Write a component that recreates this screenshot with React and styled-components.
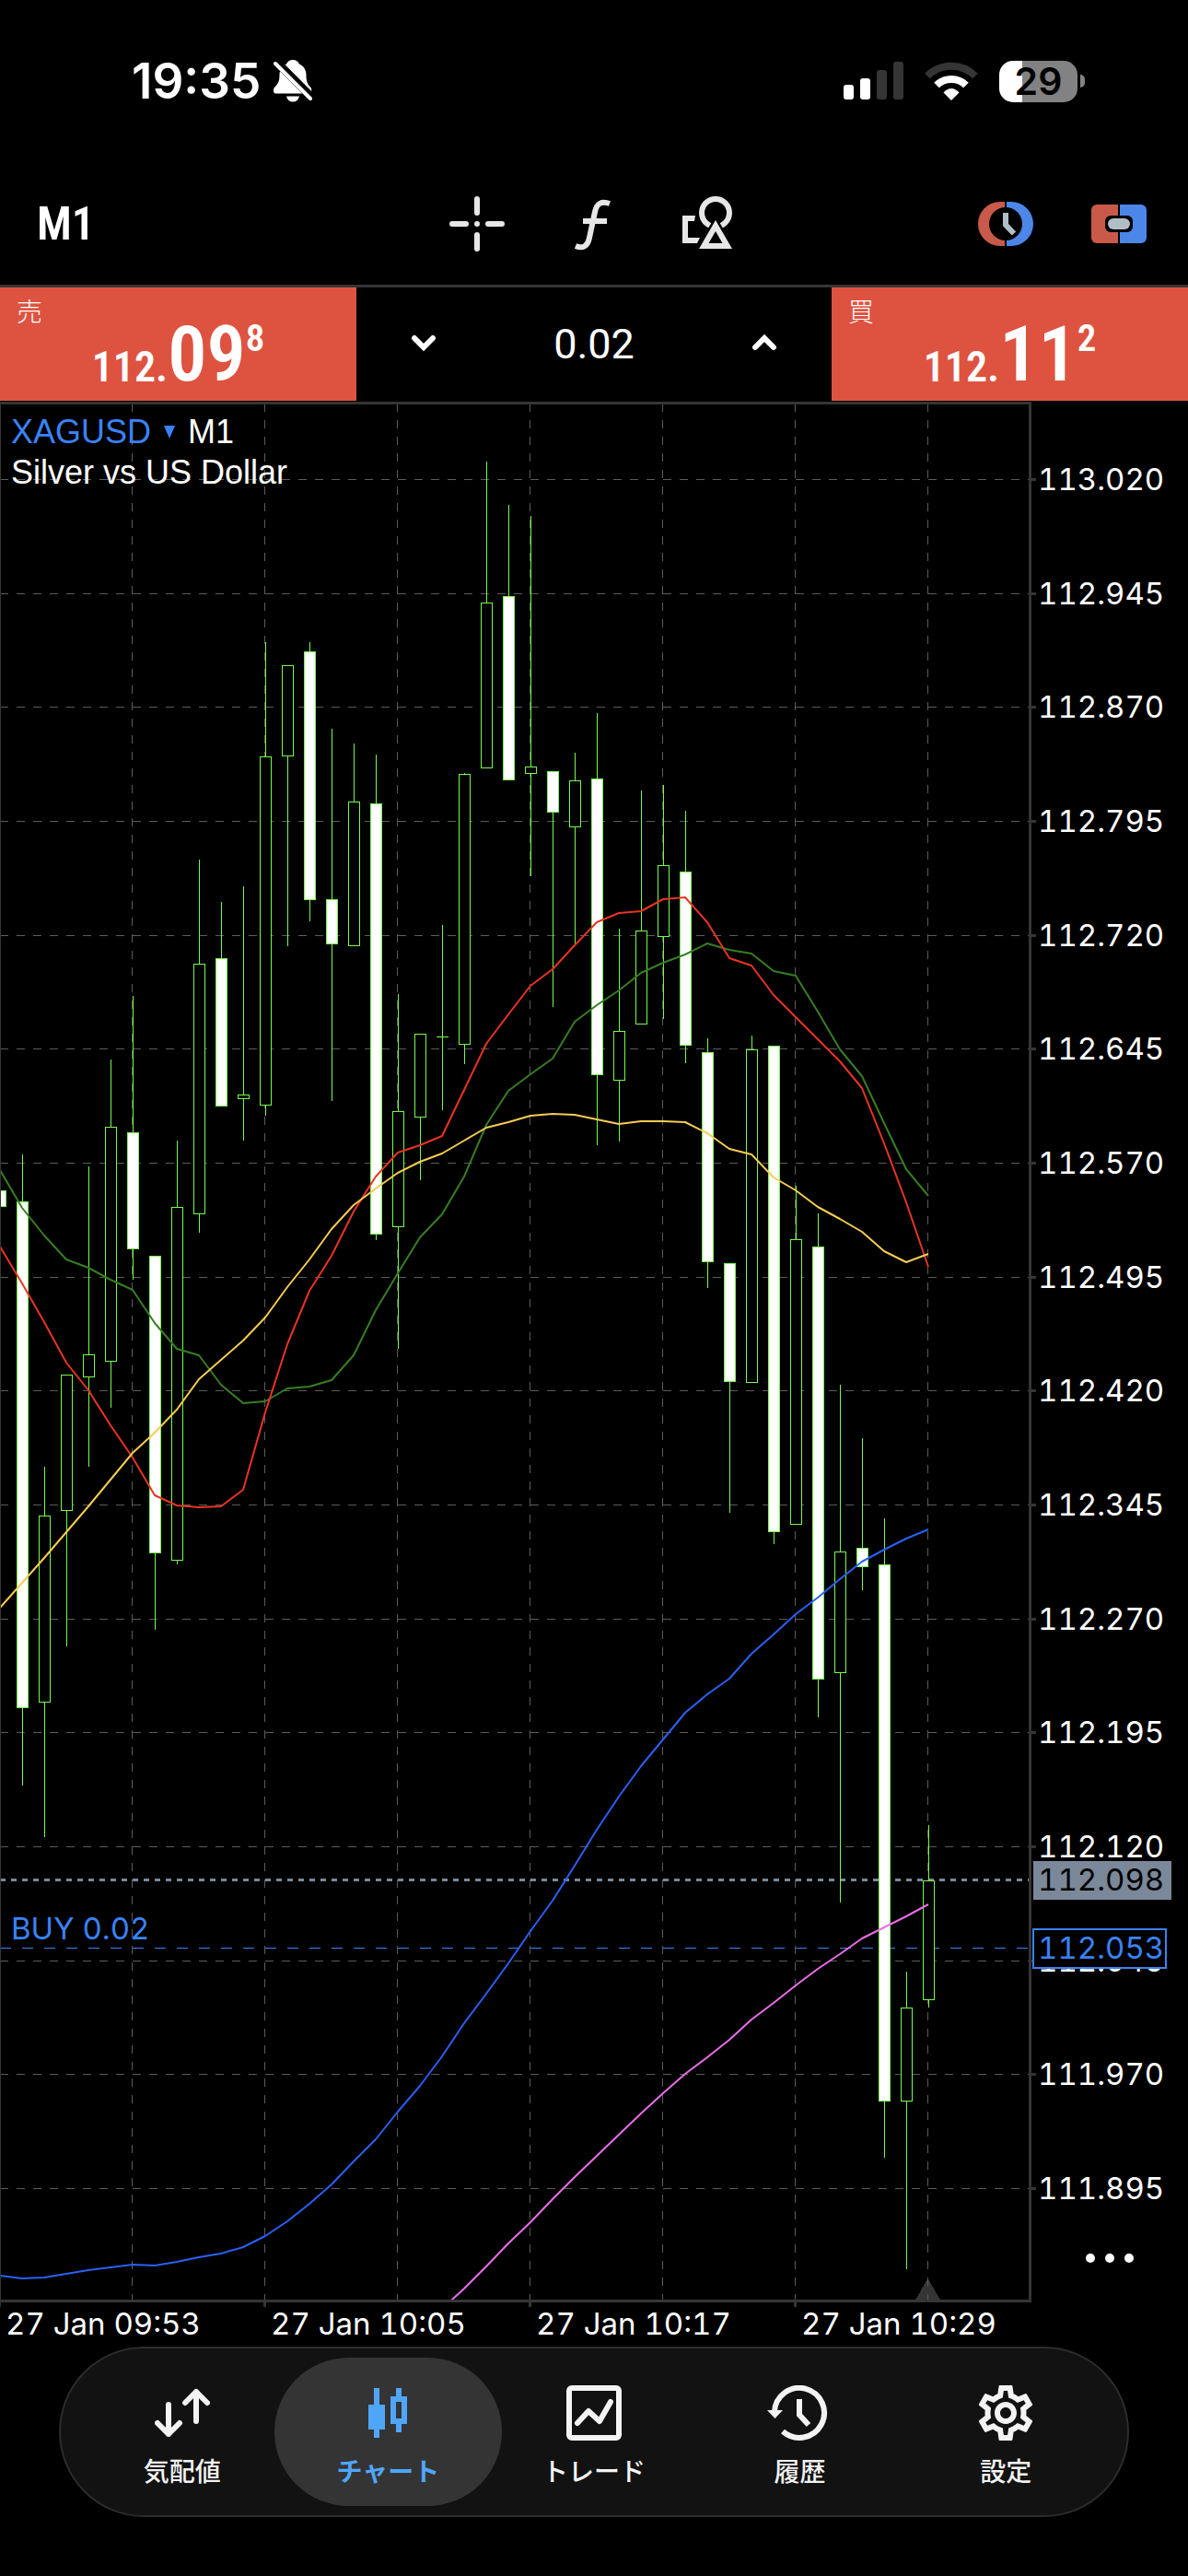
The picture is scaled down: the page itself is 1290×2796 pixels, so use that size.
import React, { useState } from "react";
import styled, { createGlobalStyle, css } from "styled-components";
import { MdOutlineSettings } from "react-icons/md";

const color = {
  bg: "#000000",
  line: "#353535",
  grid: "#5c5c5c",
  sell: "#de5340",
  blue: "#3a82f7",
  tabBlue: "#4fa6f8",
  bull: "#76fb4c",
  slate: "#7b8899",
  icon: "#e6e6e6",
  red: "#c95a49",
  azure: "#4c86e8",
  steel: "#b1bec5",
};

const uiFont = `Inter, "Noto Sans CJK JP", sans-serif`;
const narrowFont = `"Liberation Sans Narrow", "Roboto Condensed", Roboto, sans-serif`;

const GlobalStyle = createGlobalStyle`
  body {
    margin: 0;
    background: ${color.bg};
    color: #fff;
    font-family: ${uiFont};
  }
  button, input {
    appearance: none;
    margin: 0;
    padding: 0;
    border: 0;
    background: none;
    color: inherit;
    font: inherit;
  }
  button { cursor: pointer; }
  svg { display: block; }
`;

const Screen = styled.main`
  display: flex;
  flex-direction: column;
  background: ${color.bg};
`;

/* ---------- status bar ---------- */

const StatusBar = styled.header`
  display: flex;
  justify-content: space-between;
  align-items: center;
  height: 176px;
  padding: 0 112px 0 143px;
  box-sizing: border-box;
`;

const StatusGroup = styled.div`
  display: flex;
  align-items: center;
  gap: ${(p) => p.$gap}px;
`;

const Time = styled.time`
  font-size: 53px;
  line-height: 60px;
  font-weight: 600;
`;

const Battery = styled.div`
  display: flex;
  align-items: center;
  gap: 3px;
`;

const BatteryBody = styled.div`
  width: 85px;
  height: 45px;
  border-radius: 15px;
  background: linear-gradient(90deg, #fff 30%, #828282 30%);
  color: #000;
  font-size: 41px;
  line-height: 45px;
  font-weight: 600;
  text-align: center;
`;

const BatteryNub = styled.div`
  width: 5px;
  height: 14px;
  border-radius: 0 5px 5px 0;
  background: #828282;
`;

/* ---------- toolbar ---------- */

const Toolbar = styled.nav`
  display: grid;
  grid-template-columns: 1fr auto 1fr;
  align-items: center;
  height: 133px;
  padding: 0 45px 0 40px;
  border-bottom: 3px solid ${color.line};
`;

const Tools = styled.div`
  display: flex;
  gap: ${(p) => p.$gap}px;
  justify-content: ${(p) => (p.$end ? "flex-end" : "center")};
`;

const Timeframe = styled.button`
  justify-self: start;
  font-family: ${narrowFont};
  font-size: 50px;
  line-height: 60px;
  font-weight: 600;
`;

/* ---------- one click trading ---------- */

const TradePanel = styled.section`
  display: grid;
  grid-template-columns: 3fr 4fr 3fr;
  height: 123px;
  margin-bottom: 1px;
`;

const PriceButton = styled.button`
  display: flex;
  flex-direction: column;
  padding: 11px 18px 0;
  background: ${color.sell};
  text-align: left;
`;

const Side = styled.span`
  font-family: "Noto Sans CJK JP", sans-serif;
  font-size: 28px;
  line-height: 28px;
  font-weight: 300;
`;

const Quote = styled.span`
  display: flex;
  align-items: flex-start;
  align-self: center;
  font-family: ${narrowFont};
  font-weight: 600;
`;

const Whole = styled.span`
  padding-top: 24px;
  font-size: 46px;
  line-height: 46px;
`;

const Big = styled.span`
  font-size: 84px;
  line-height: 68px;
`;

const Pip = styled.span`
  font-size: 41px;
  line-height: 32px;
`;

const Volume = styled.div`
  display: flex;
  align-items: center;
  justify-content: space-between;
`;

const Step = styled.button`
  display: flex;
  justify-content: center;
  align-items: center;
  width: 146px;
  height: 120px;
  padding-bottom: 3px;
`;

const VolumeInput = styled.input`
  width: 160px;
  min-width: 0;
  height: 80px;
  font-family: Roboto, sans-serif;
  font-size: 45px;
  text-align: center;
  outline: none;
`;

/* ---------- chart ---------- */

const ChartArea = styled.section`
  position: relative;
`;

const Plot = styled.svg`
  width: 100%;
  height: auto;
`;

const AxisText = styled.text`
  font-family: Inter, sans-serif;
  font-size: 33px;
  font-variant-numeric: tabular-nums;
  fill: ${(p) => p.$fill || "#fff"};
`;

const Legend = styled.div`
  position: absolute;
  top: 11px;
  left: 12px;
  font-family: "Liberation Sans", sans-serif;
  font-size: 36px;
  line-height: 44px;
`;

const SymbolRow = styled.button`
  display: flex;
  align-items: center;
  gap: 14px;
`;

const SymbolName = styled.span`
  color: ${color.blue};
`;

const More = styled.button`
  position: absolute;
  right: 48px;
  bottom: 76px;
  display: flex;
  justify-content: center;
  align-items: center;
  gap: 11px;
  width: 74px;
  height: 40px;
`;

const Dot = styled.span`
  width: 10px;
  height: 10px;
  border-radius: 50%;
  background: #fff;
`;

/* ---------- tab bar ---------- */

const TabBar = styled.nav`
  display: grid;
  grid-template-columns: repeat(5, 1fr);
  height: 185px;
  margin: 0 64px 64px;
  padding: 0 20px;
  box-sizing: border-box;
  border: 2px solid #2c2c2c;
  border-radius: 93px;
  background: #121212;
`;

const Tab = styled.button`
  display: flex;
  flex-direction: column;
  align-items: center;
  gap: 12px;
  margin: 10px -12px;
  padding-top: 30px;
  border-radius: 81px;
  color: #f3f3f3;
  font-family: "Noto Sans CJK JP", sans-serif;
  font-size: 28px;
  line-height: 40px;
  font-weight: 500;
  ${(p) =>
    p.$active &&
    css`
      background: #343434;
      color: ${color.tabBlue};
      font-weight: 700;
    `}
`;

const TabIcon = styled.span`
  display: flex;
  justify-content: center;
  align-items: center;
  height: 60px;
`;

/* ---------- icons ---------- */

const BellOff = () => (
  <svg width="42" height="46" viewBox="0 0 42 46" aria-hidden="true">
    <path d="M21 0c3.500 0 6 1.800 7 4.500 5 2.300 7.500 6.500 7.500 12 0 7 1.500 10 5 13.500 1.500 2 1 6.500-2.500 6.500H3c-3.500 0-4-4-2-6.500C5 26 6.500 23 6.500 16.500c0-5.500 2.500-9.700 7.500-12C15 1.800 17.500 0 21 0z" fill="#fff" />
    <path d="M14 39.500h14c-1 4-3.500 6-7 6s-6-2-7-6z" fill="#fff" />
    <path d="M1 0L42 41" stroke="#000" strokeWidth="9" />
    <path d="M2 4L40 42" stroke="#fff" strokeWidth="4" strokeLinecap="round" />
  </svg>
);

const Signal = () => (
  <svg width="65" height="42" viewBox="0 0 65 42" aria-hidden="true">
    <rect x="0" y="25" width="11" height="16" rx="3" fill="#fff" />
    <rect x="18" y="18" width="11" height="23" rx="3" fill="#fff" />
    <rect x="36" y="9" width="11" height="32" rx="3" fill="#353535" />
    <rect x="54" y="0" width="11" height="41" rx="3" fill="#353535" />
  </svg>
);

const Wifi = () => (
  <svg width="58" height="42" viewBox="0 0 58 42" aria-hidden="true">
    <path d="M3 15.500A37 37 0 0 1 55 15.500" fill="none" stroke="#353535" strokeWidth="8" />
    <path d="M13 25.500A23 23 0 0 1 45 25.500" fill="none" stroke="#fff" strokeWidth="8" />
    <path d="M29 42L20.500 33.500Q24.500 29 29 29T37.500 33.500z" fill="#fff" />
  </svg>
);

const Crosshair = () => (
  <svg width="60" height="60" viewBox="0 0 60 60" aria-hidden="true">
    <g stroke={color.icon} strokeWidth="6" strokeLinecap="round">
      <path d="M30 3V18M30 42V57M3 30H18M42 30H57" />
      <path d="M30 30V30.010" />
    </g>
  </svg>
);

const FunctionIcon = () => (
  <svg width="60" height="60" viewBox="0 0 60 60" aria-hidden="true">
    <path
      d="M12 54Q24 59 27 45L33 17Q36 3 49 8M20 27H46"
      fill="none"
      stroke={color.icon}
      strokeWidth="6"
    />
  </svg>
);

const ShapesIcon = () => (
  <svg width="60" height="60" viewBox="0 0 60 60" aria-hidden="true">
    <path d="M17 21H3V51H19L22 45H9V27H16z" fill={color.icon} />
    <circle cx="39" cy="18" r="15" fill="none" stroke={color.icon} strokeWidth="6" />
    <path d="M39 26L57 57H21z" fill="#000" stroke="#000" strokeWidth="5" />
    <path
      d="M39 26L57 57H21zM39 38L31.500 51H46.500z"
      fill={color.icon}
      fillRule="evenodd"
    />
  </svg>
);

const SessionIcon = () => (
  <svg width="60" height="60" viewBox="0 0 60 60" aria-hidden="true">
    <path d="M29 6H24A24 24 0 0 0 24 54H29z" fill={color.red} />
    <path d="M31 6H36A24 24 0 0 1 36 54H31z" fill={color.azure} />
    <circle cx="30" cy="30" r="18" fill="#000" />
    <path d="M30 18V31L39 40.500" fill="none" stroke={color.steel} strokeWidth="6" />
  </svg>
);

const PanelIcon = () => (
  <svg width="60" height="60" viewBox="0 0 60 60" aria-hidden="true">
    <path d="M29 9H6A6 6 0 0 0 0 15V45A6 6 0 0 0 6 51H29z" fill={color.red} />
    <path d="M31 9H54A6 6 0 0 1 60 15V45A6 6 0 0 1 54 51H31z" fill={color.azure} />
    <rect x="15" y="21" width="30" height="18" rx="6" fill="#000" />
    <rect x="18" y="24" width="24" height="12" rx="6" fill={color.steel} />
  </svg>
);

const Chevron = ({ up }) => (
  <svg width="28" height="20" viewBox="0 0 28 20" aria-hidden="true">
    <path
      d={up ? "M4 15L14 5L24 15" : "M4 5L14 15L24 5"}
      fill="none"
      stroke="#fff"
      strokeWidth="6"
      strokeLinecap="round"
    />
  </svg>
);

const QuotesIcon = () => (
  <svg width="60" height="60" viewBox="0 0 60 60" aria-hidden="true">
    <path
      d="M15 21V53M3 41L15 53L27 41M45 39V7M33 19L45 7L57 19"
      fill="none"
      stroke="currentColor"
      strokeWidth="6"
      strokeLinecap="round"
      strokeLinejoin="round"
    />
  </svg>
);

const CandlesIcon = () => (
  <svg width="60" height="60" viewBox="0 0 60 60" fill="currentColor" aria-hidden="true">
    <path d="M15 3H21V21H27V48H21V57H15V48H9V21H15z" />
    <path fillRule="evenodd" d="M39 3H45V12H51V42H45V51H39V42H33V12H39zM39 18V36H45V18z" />
  </svg>
);

const TradeIcon = () => (
  <svg width="60" height="60" viewBox="0 0 60 60" fill="none" stroke="currentColor" strokeWidth="6" aria-hidden="true">
    <rect x="3" y="3" width="54" height="54" rx="3" />
    <path d="M12 41L24 28L36 39L48 18" strokeLinecap="round" strokeLinejoin="round" />
  </svg>
);

const HistoryIcon = () => (
  <svg width="72" height="60" viewBox="0 0 72 60" aria-hidden="true">
    <path d="M8 29A27 27 0 1 1 17 50M35 15V32L45 43" fill="none" stroke="currentColor" strokeWidth="6" />
    <path d="M0 27H17L8.500 36z" fill="currentColor" />
  </svg>
);

/* ---------- chart data ---------- */

const TOP = 436;
const BOTTOM = 2498;
const RIGHT = 1118;
const STEP = 24;

const PRICES = [
  "113.020", "112.945", "112.870", "112.795", "112.720", "112.645", "112.570", "112.495",
  "112.420", "112.345", "112.270", "112.195", "112.120", "112.045", "111.970", "111.895",
];
const priceY = (index) => Math.round(520.5 + index * 123.67 - 0.5) + 0.5;

const TIMES = ["27 Jan 09:53", "27 Jan 10:05", "27 Jan 10:17", "27 Jan 10:29"];

// [high, body top, body bottom, low, falling]
const CANDLES = [
  [1292, 1292, 1309, 1309, 1], [1253, 1304, 1853, 1938, 1], [1592, 1645, 1847, 1994, 0],
  [1492, 1492, 1639, 1787, 0], [1266, 1470, 1494, 1592, 0], [1150, 1223, 1477, 1528, 0],
  [1081, 1229, 1355, 1389, 1], [1363, 1363, 1685, 1769, 1], [1238, 1310, 1693, 1698, 0],
  [933, 1046, 1317, 1338, 0], [979, 1040, 1200, 1200, 1], [962, 1188, 1192, 1238, 0],
  [697, 821, 1199, 1211, 0], [722, 722, 820, 1027, 0], [697, 707, 976, 1000, 1],
  [791, 976, 1024, 1195, 1], [807, 870, 1026, 1026, 0], [819, 872, 1339, 1346, 1],
  [1079, 1206, 1331, 1464, 0], [1122, 1122, 1212, 1281, 0], [1004, 1125, 1125, 1205, 0],
  [839, 840, 1133, 1155, 0], [501, 654, 833, 833, 0], [548, 647, 846, 846, 1],
  [560, 832, 839, 951, 0], [837, 837, 881, 1093, 1], [817, 847, 897, 1025, 0],
  [774, 845, 1166, 1243, 1], [1008, 1119, 1172, 1239, 0], [858, 1010, 1111, 1111, 0],
  [852, 939, 1016, 1106, 0], [880, 946, 1134, 1154, 1], [1127, 1142, 1369, 1398, 1],
  [1371, 1371, 1499, 1642, 1], [1124, 1139, 1500, 1500, 0], [1135, 1135, 1662, 1676, 1],
  [1287, 1345, 1654, 1654, 0], [1317, 1353, 1822, 1864, 1], [1503, 1684, 1815, 2065, 0],
  [1561, 1680, 1700, 1726, 1], [1648, 1698, 2280, 2342, 1], [2140, 2179, 2280, 2463, 0],
  [1981, 2041, 2170, 2179, 0],
];

const AVERAGES = [
  {
    stroke: "#377e22",
    from: 0,
    ys: [1270, 1311, 1341, 1367, 1376, 1389, 1400, 1436, 1464, 1471, 1503, 1523, 1521, 1507, 1505, 1498, 1471, 1422, 1382, 1343, 1318, 1277, 1221, 1184, 1166, 1149, 1109, 1091, 1075, 1056, 1045, 1036, 1024, 1031, 1035, 1054, 1059, 1098, 1139, 1168, 1219, 1269, 1298],
  },
  {
    stroke: "#ea3323",
    from: 0,
    ys: [1353, 1393, 1435, 1479, 1509, 1547, 1582, 1623, 1634, 1636, 1635, 1617, 1533, 1459, 1401, 1363, 1315, 1277, 1251, 1243, 1233, 1183, 1133, 1101, 1070, 1052, 1026, 1001, 991, 989, 976, 974, 1001, 1040, 1048, 1080, 1104, 1128, 1152, 1181, 1241, 1305, 1375],
  },
  {
    stroke: "#f6cc52",
    from: 0,
    ys: [1745, 1718, 1691, 1663, 1635, 1606, 1577, 1555, 1530, 1497, 1476, 1455, 1430, 1397, 1367, 1334, 1308, 1290, 1273, 1261, 1252, 1238, 1224, 1218, 1211, 1209, 1210, 1215, 1220, 1217, 1217, 1218, 1230, 1247, 1253, 1278, 1292, 1310, 1323, 1337, 1358, 1370, 1361],
  },
  {
    stroke: "#2a60f5",
    from: 0,
    ys: [2470, 2473, 2472, 2468, 2464, 2461, 2458, 2459, 2455, 2450, 2446, 2439, 2427, 2411, 2392, 2371, 2346, 2322, 2292, 2264, 2232, 2196, 2164, 2131, 2096, 2063, 2025, 1986, 1950, 1917, 1888, 1859, 1839, 1822, 1795, 1774, 1752, 1734, 1714, 1695, 1682, 1670, 1660],
  },
  {
    stroke: "#ea6ee8",
    from: 20,
    ys: [2506, 2484, 2460, 2435, 2412, 2387, 2363, 2340, 2317, 2294, 2272, 2251, 2233, 2214, 2192, 2174, 2155, 2137, 2121, 2104, 2092, 2080, 2067],
  },
];

const Candle = ({ x, data: [high, top, bottom, low, falling] }) => (
  <g stroke={color.bull} strokeWidth="1">
    <path d={`M${x} ${high}V${low}`} />
    {top === bottom ? (
      <path d={`M${x - 6.5} ${top + 0.5}H${x + 6.5}`} />
    ) : (
      <rect
        x={x - 6}
        y={top + 0.5}
        width="12"
        height={bottom - top}
        fill={falling ? "#fff" : "#000"}
      />
    )}
  </g>
);

const PriceTag = ({ y, text, width, fill, stroke, ink }) => (
  <g>
    <rect x="1122" y={y - 20} width={width} height="42" fill={fill} stroke={stroke} strokeWidth="2" />
    <AxisText x="1127" y={y + 12} $fill={ink}>
      {text}
    </AxisText>
  </g>
);

const Chart = () => (
  <Plot viewBox={`0 ${TOP} 1290 2111`} role="img" aria-label="XAGUSD M1">
    <defs>
      <clipPath id="plot">
        <rect x="0" y={TOP} width={RIGHT} height={BOTTOM - TOP} />
      </clipPath>
    </defs>
    <g shapeRendering="crispEdges">
      <path d="M1007.500 2473L1022 2498H993z" fill={color.line} />
      <g stroke={color.grid} strokeWidth="1" strokeDasharray="9 9">
        {PRICES.map((p, i) => (
          <path key={p} d={`M0 ${priceY(i)}H${RIGHT}`} />
        ))}
        {[0, 1, 2, 3, 4, 5, 6].map((i) => (
          <path key={i} d={`M${143.5 + i * 144} 438V${BOTTOM}`} />
        ))}
      </g>
      <path d="M0 2040.500H1118" stroke={color.slate} strokeWidth="3" strokeDasharray="6 6" />
      <path d="M0 2114.500H1118" stroke={color.blue} strokeWidth="1" strokeDasharray="12 12" />
      <g clipPath="url(#plot)">
        {CANDLES.map((c, i) => (
          <Candle key={i} x={i * STEP + 0.5} data={c} />
        ))}
      </g>
    </g>
    <g clipPath="url(#plot)" fill="none" strokeWidth="2" strokeLinejoin="round">
      {AVERAGES.map(({ stroke, from, ys }) => (
        <polyline
          key={stroke}
          stroke={stroke}
          points={ys.map((y, i) => `${(from + i) * STEP},${y}`).join(" ")}
        />
      ))}
    </g>
    <g stroke={color.line} strokeWidth="3" fill="none" shapeRendering="crispEdges">
      <path d="M0 437.500H1118.500V2497.500H0" />
      <path d="M0.500 437V2504" strokeWidth="1" />
      {PRICES.map((p, i) => (
        <path key={p} d={`M1120 ${priceY(i)}H1125`} />
      ))}
      {[287.5, 575.5, 863.5].map((x) => (
        <path key={x} d={`M${x} 2498V2504`} />
      ))}
    </g>
    {PRICES.map((p, i) => (
      <AxisText key={p} x="1127" y={priceY(i) + 11}>
        {p}
      </AxisText>
    ))}
    {TIMES.map((t, i) => (
      <AxisText key={t} x={6 + i * 288} y="2534">
        {t}
      </AxisText>
    ))}
    <AxisText x="12" y="2105" $fill={color.blue}>
      BUY 0.02
    </AxisText>
    <PriceTag y={2040} text="112.098" width={150} fill={color.slate} stroke="none" ink="#000" />
    <PriceTag y={2114} text="112.053" width={144} fill="#000" stroke={color.blue} ink={color.blue} />
  </Plot>
);

const TABS = [
  { id: "quotes", label: "気配値", icon: <QuotesIcon /> },
  { id: "chart", label: "チャート", icon: <CandlesIcon /> },
  { id: "trade", label: "トレード", icon: <TradeIcon /> },
  { id: "history", label: "履歴", icon: <HistoryIcon /> },
  { id: "settings", label: "設定", icon: <MdOutlineSettings size={72} /> },
];

const Price = ({ side, whole, big, pip }) => (
  <PriceButton type="button">
    <Side>{side}</Side>
    <Quote>
      <Whole>{whole}</Whole>
      <Big>{big}</Big>
      <Pip>{pip}</Pip>
    </Quote>
  </PriceButton>
);

export default function App() {
  const [tab, setTab] = useState("chart");
  const [volume, setVolume] = useState("0.02");
  const change = (d) =>
    setVolume((v) => Math.max(0.01, (parseFloat(v) || 0) + d).toFixed(2));

  return (
    <Screen>
      <GlobalStyle />
      <StatusBar>
        <StatusGroup $gap={14}>
          <Time>19:35</Time>
          <BellOff />
        </StatusGroup>
        <StatusGroup $gap={23}>
          <Signal />
          <Wifi />
          <Battery>
            <BatteryBody>29</BatteryBody>
            <BatteryNub />
          </Battery>
        </StatusGroup>
      </StatusBar>

      <Toolbar>
        <Timeframe type="button">M1</Timeframe>
        <Tools $gap={65}>
          <button type="button" aria-label="Crosshair"><Crosshair /></button>
          <button type="button" aria-label="Indicators"><FunctionIcon /></button>
          <button type="button" aria-label="Objects"><ShapesIcon /></button>
        </Tools>
        <Tools $gap={63} $end>
          <button type="button" aria-label="Sessions"><SessionIcon /></button>
          <button type="button" aria-label="One click trading"><PanelIcon /></button>
        </Tools>
      </Toolbar>

      <TradePanel>
        <Price side="売" whole="112." big="09" pip="8" />
        <Volume>
          <Step type="button" aria-label="Decrease volume" onClick={() => change(-0.01)}>
            <Chevron />
          </Step>
          <VolumeInput
            aria-label="Volume"
            value={volume}
            onChange={(e) => setVolume(e.target.value)}
          />
          <Step type="button" aria-label="Increase volume" onClick={() => change(0.01)}>
            <Chevron up />
          </Step>
        </Volume>
        <Price side="買" whole="112." big="11" pip="2" />
      </TradePanel>

      <ChartArea>
        <Chart />
        <Legend>
          <SymbolRow type="button">
            <SymbolName>XAGUSD</SymbolName>
            <svg width="12" height="14" viewBox="0 0 12 14" aria-hidden="true">
              <path d="M0 0H12L6 14z" fill={color.blue} />
            </svg>
            <span>M1</span>
          </SymbolRow>
          <div>Silver vs US Dollar</div>
        </Legend>
        <More type="button" aria-label="More">
          <Dot />
          <Dot />
          <Dot />
        </More>
      </ChartArea>

      <TabBar>
        {TABS.map(({ id, label, icon }) => (
          <Tab key={id} type="button" $active={tab === id} onClick={() => setTab(id)}>
            <TabIcon>{icon}</TabIcon>
            {label}
          </Tab>
        ))}
      </TabBar>
    </Screen>
  );
}
